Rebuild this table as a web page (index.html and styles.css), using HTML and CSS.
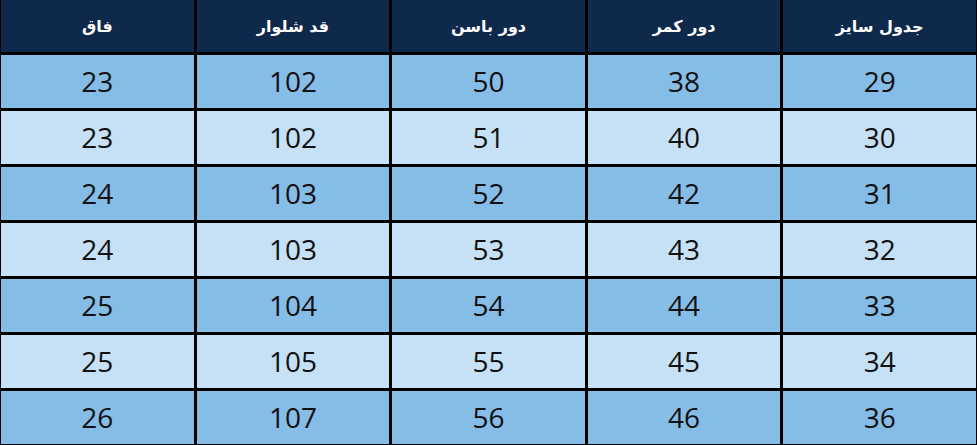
FILE: index.html
```html
<!DOCTYPE html>
<html lang="fa" dir="rtl">
<head>
<meta charset="utf-8">
<title>جدول سایز</title>
<link rel="stylesheet" href="styles.css">
</head>
<body>
<div class="table">
  <div class="cell head">جدول سایز</div>
  <div class="cell head">دور کمر</div>
  <div class="cell head">دور باسن</div>
  <div class="cell head">قد شلوار</div>
  <div class="cell head">فاق</div>

  <div class="cell dark">29</div><div class="cell dark">38</div><div class="cell dark">50</div><div class="cell dark">102</div><div class="cell dark">23</div>
  <div class="cell light">30</div><div class="cell light">40</div><div class="cell light">51</div><div class="cell light">102</div><div class="cell light">23</div>
  <div class="cell dark">31</div><div class="cell dark">42</div><div class="cell dark">52</div><div class="cell dark">103</div><div class="cell dark">24</div>
  <div class="cell light">32</div><div class="cell light">43</div><div class="cell light">53</div><div class="cell light">103</div><div class="cell light">24</div>
  <div class="cell dark">33</div><div class="cell dark">44</div><div class="cell dark">54</div><div class="cell dark">104</div><div class="cell dark">25</div>
  <div class="cell light">34</div><div class="cell light">45</div><div class="cell light">55</div><div class="cell light">105</div><div class="cell light">25</div>
  <div class="cell dark">36</div><div class="cell dark">46</div><div class="cell dark">56</div><div class="cell dark">107</div><div class="cell dark">26</div>
</div>
</body>
</html>
```

FILE: styles.css
```css
html, body {
  margin: 0;
  padding: 0;
  background: #000;
}
body {
  width: 977px;
  height: 445px;
  overflow: hidden;
}
.table {
  display: grid;
  grid-template-columns: repeat(5, 1fr);
  grid-template-rows: 52px repeat(7, 53px);
  gap: 3px;
  padding: 0 1px 1px 1px;
  background: #000;
}
.cell {
  display: flex;
  align-items: center;
  justify-content: center;
  color: #111;
  font-family: "Open Sans", "DejaVu Sans", sans-serif;
  font-size: 28px;
  padding-bottom: 2px;
}
.head {
  background: #0f294c;
  color: #fff;
  font-family: "DejaVu Sans", sans-serif;
  font-weight: bold;
  font-size: 16px;
  padding-bottom: 0;
}
.dark {
  background: #86bde7;
}
.light {
  background: #c6e1f6;
}
```
